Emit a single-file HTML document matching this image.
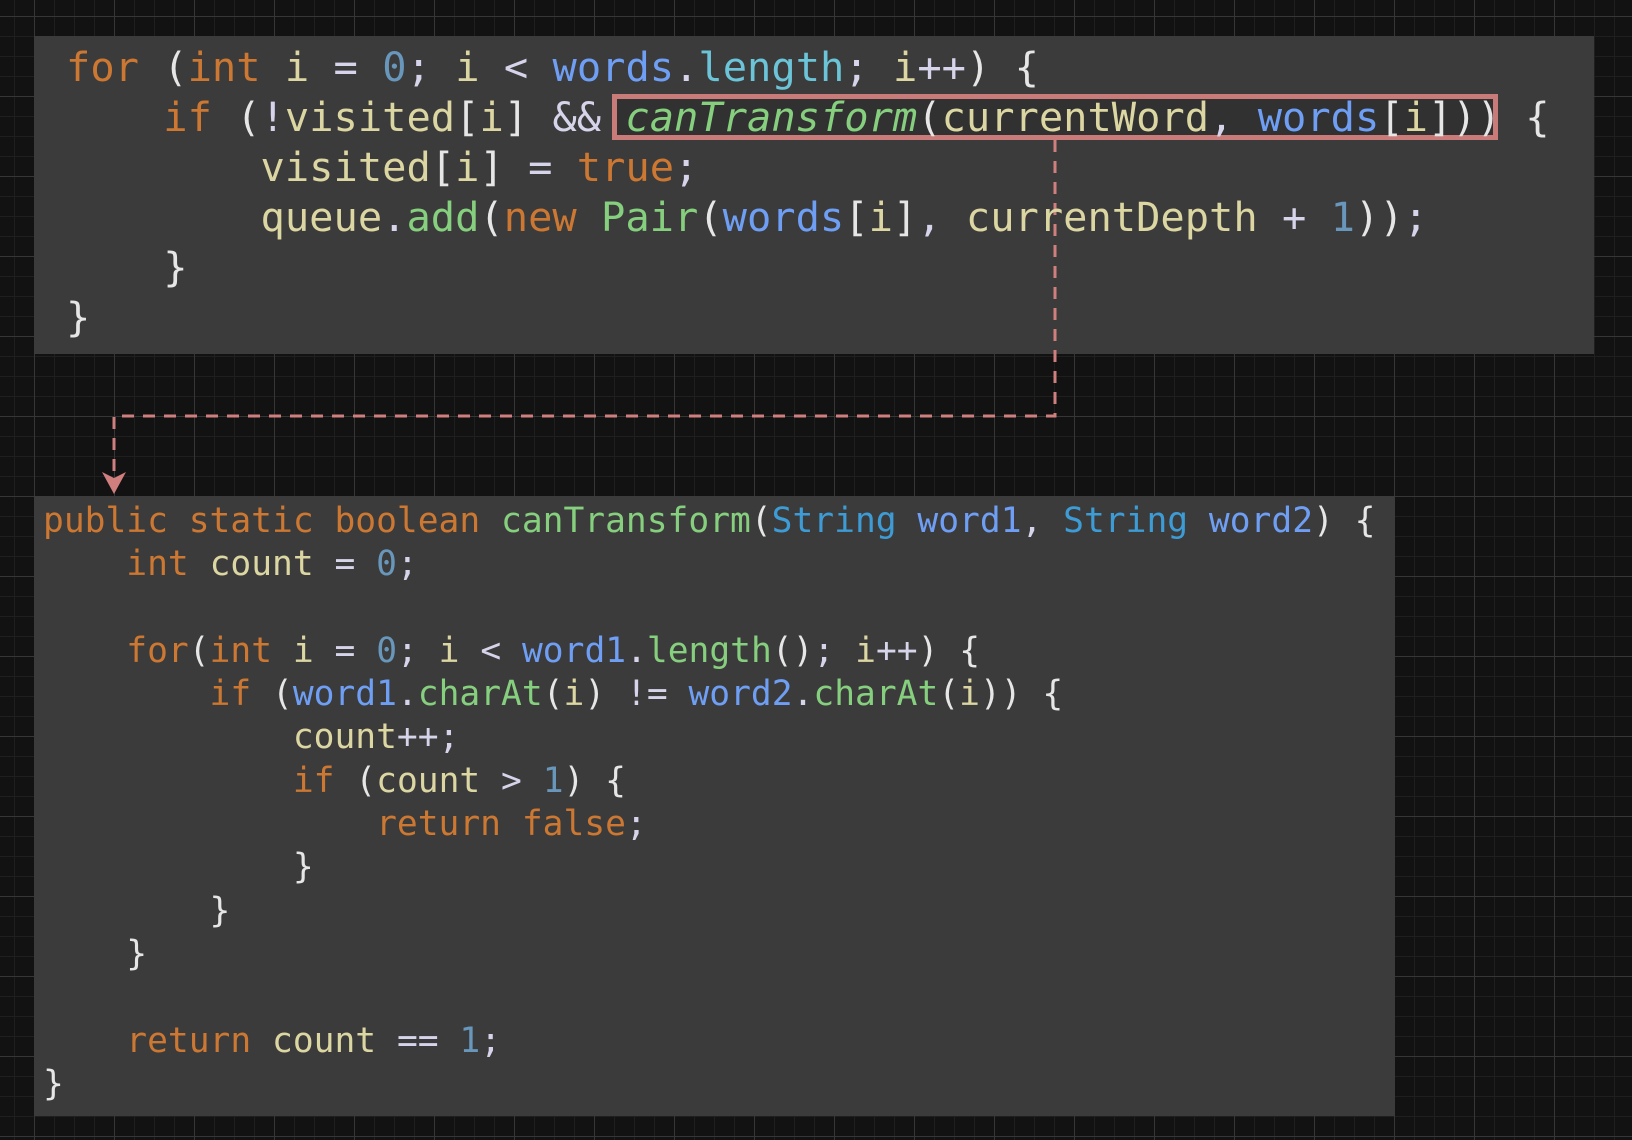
<!DOCTYPE html>
<html><head><meta charset="utf-8"><style>
html,body{margin:0;padding:0}
body{width:1632px;height:1140px;overflow:hidden;position:relative;
background-color:#121212;
background-image:
linear-gradient(to right,#363636 1px,transparent 1px),
linear-gradient(to bottom,#363636 1px,transparent 1px),
linear-gradient(to right,#1f1f1f 1px,transparent 1px),
linear-gradient(to bottom,#1f1f1f 1px,transparent 1px);
background-size:80px 80px,80px 80px,20px 20px,20px 20px;
background-position:34px 16px,34px 16px,14px 16px,14px 16px;
font-family:"DejaVu Sans Mono","Liberation Mono",monospace;}
.panel{position:absolute;background:#3b3b3b}
.code{position:absolute;margin:0}
.code div{white-space:pre;height:var(--lh);line-height:var(--lh)}
.k{color:#cc7832}.v{color:#dcd6a2}.p{color:#e6e6e6}.o{color:#d6d4ea}
.n{color:#6897bb}.b{color:#6f9ff5}.c{color:#6cc4d8}.g{color:#86cf7e}.s{color:#3d9cd6}
</style></head><body>
<div class="panel" style="left:34px;top:36px;width:1560px;height:318px"></div>
<div class="panel" style="left:34px;top:496px;width:1361px;height:620px"></div>
<div style="position:absolute;left:612px;top:94px;width:876px;height:36px;border:5px solid #c97b79;background:#313131"></div>
<svg style="position:absolute;left:0;top:0" width="1632" height="1140">
<path d="M1055 140 V416 H114 V478" fill="none" stroke="#cf7f7d" stroke-width="3" stroke-dasharray="12 9"/>
<path d="M102 472 L114 494 L126 472 L114 478 Z" fill="#cf7f7d"/>
</svg>
<div class="code" style="left:66px;top:42px;font-size:40.4px;--lh:50px"><div><span class="k">for</span> <span class="p">(</span><span class="k">int</span> <span class="v">i</span> <span class="o">=</span> <span class="n">0</span><span class="o">;</span> <span class="v">i</span> <span class="o">&lt;</span> <span class="b">words</span><span class="o">.</span><span class="c">length</span><span class="o">;</span> <span class="v">i</span><span class="o">++</span><span class="p">) {</span></div><div>    <span class="k">if</span> <span class="p">(</span><span class="o">!</span><span class="v">visited</span><span class="p">[</span><span class="v">i</span><span class="p">]</span> <span class="o">&amp;&amp;</span> <span class="g" style="font-style:italic">canTransform</span><span class="p">(</span><span class="v">currentWord</span><span class="o">,</span> <span class="b">words</span><span class="p">[</span><span class="v">i</span><span class="p">]))</span> <span class="p">{</span></div><div>        <span class="v">visited</span><span class="p">[</span><span class="v">i</span><span class="p">]</span> <span class="o">=</span> <span class="k">true</span><span class="o">;</span></div><div>        <span class="v">queue</span><span class="o">.</span><span class="g">add</span><span class="p">(</span><span class="k">new</span> <span class="g">Pair</span><span class="p">(</span><span class="b">words</span><span class="p">[</span><span class="v">i</span><span class="p">]</span><span class="o">,</span> <span class="v">currentDepth</span> <span class="o">+</span> <span class="n">1</span><span class="p">))</span><span class="o">;</span></div><div>    <span class="p">}</span></div><div><span class="p">}</span></div></div>
<div class="code" style="left:43px;top:500px;font-size:34.6px;--lh:43.3px"><div><span class="k">public static boolean</span> <span class="g">canTransform</span><span class="p">(</span><span class="s">String</span> <span class="b">word1</span><span class="o">,</span> <span class="s">String</span> <span class="b">word2</span><span class="p">) {</span></div><div>    <span class="k">int</span> <span class="v">count</span> <span class="o">=</span> <span class="n">0</span><span class="o">;</span></div><div> </div><div>    <span class="k">for</span><span class="p">(</span><span class="k">int</span> <span class="v">i</span> <span class="o">=</span> <span class="n">0</span><span class="o">;</span> <span class="v">i</span> <span class="o">&lt;</span> <span class="b">word1</span><span class="o">.</span><span class="g">length</span><span class="p">()</span><span class="o">;</span> <span class="v">i</span><span class="o">++</span><span class="p">) {</span></div><div>        <span class="k">if</span> <span class="p">(</span><span class="b">word1</span><span class="o">.</span><span class="g">charAt</span><span class="p">(</span><span class="v">i</span><span class="p">)</span> <span class="o">!=</span> <span class="b">word2</span><span class="o">.</span><span class="g">charAt</span><span class="p">(</span><span class="v">i</span><span class="p">)) {</span></div><div>            <span class="v">count</span><span class="o">++;</span></div><div>            <span class="k">if</span> <span class="p">(</span><span class="v">count</span> <span class="o">&gt;</span> <span class="n">1</span><span class="p">) {</span></div><div>                <span class="k">return false</span><span class="o">;</span></div><div>            <span class="p">}</span></div><div>        <span class="p">}</span></div><div>    <span class="p">}</span></div><div> </div><div>    <span class="k">return</span> <span class="v">count</span> <span class="o">==</span> <span class="n">1</span><span class="o">;</span></div><div><span class="p">}</span></div></div>
</body></html>
